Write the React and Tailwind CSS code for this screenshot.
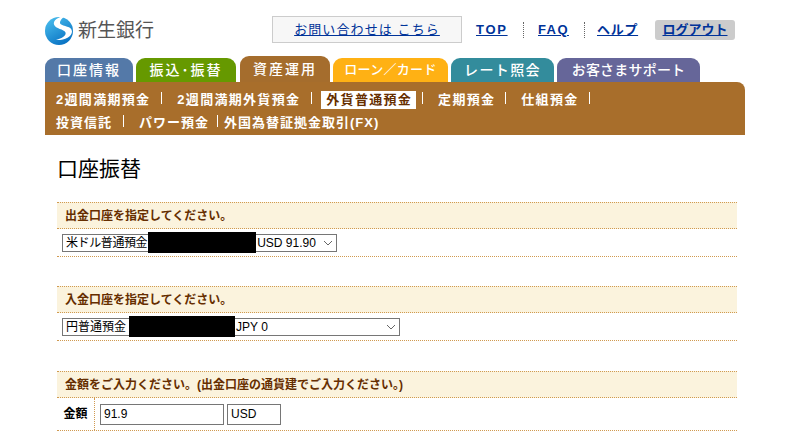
const font = { fontFamily: '"Liberation Sans", "Noto Sans CJK JP", sans-serif' };

function Logo() {
  return (
    <svg width="28" height="29" viewBox="0 0 28 29" className="shrink-0">
      <defs>
        <linearGradient id="lg" x1="0" y1="0" x2="0.6" y2="1">
          <stop offset="0" stopColor="#4fc3f0" />
          <stop offset="1" stopColor="#0a74c4" />
        </linearGradient>
      </defs>
      <circle cx="14" cy="15" r="14" fill="url(#lg)" />
      <path d="M20 0 C12 1 8 5 9 8.5 C10.5 13 19 13 20.5 16.5 C21.5 19.5 17 22.5 11 24 C19 24.5 27 21 27 15.5 C27 10 18 10.5 15.5 8 C14 6 16 3 20 0 Z" fill="#fff" />
    </svg>
  );
}

const tabs = [
  ["口座情報", "w-[88px] h-[24px] bg-[#5479a8] mr-[3px] text-[14px] tracking-[2px]"],
  ["振込･振替", "w-[100px] h-[24px] bg-[#669900] mr-[4px] text-[14px] tracking-[2px]"],
  ["資産運用", "w-[90px] h-[26px] bg-[#a56d2d] mr-[3px] text-[14px] tracking-[2px]"],
  ["ローン／カード", "w-[115px] h-[24px] bg-[#ffb114] mr-[3px] text-[13px] tracking-[0.3px]"],
  ["レート照会", "w-[103px] h-[24px] bg-[#338c9c] mr-[3px] text-[14px] tracking-[1.4px]"],
  ["お客さまサポート", "w-[143px] h-[24px] bg-[#666699] text-[14px] tracking-[0.2px]"],
];

function Sep() {
  return <span className="inline-block w-px h-[12px] bg-white" />;
}

function SectionHead({ children }) {
  return (
    <div className="h-[27px] bg-[#fbf3dd] border-t border-b border-dotted border-[#d09a50] pl-[8px] flex items-center text-[12px] font-bold text-[#662e00]">
      {children}
    </div>
  );
}

function Chevron() {
  return (
    <svg width="10" height="6" viewBox="0 0 10 6" className="shrink-0">
      <path d="M1 1 L5 5 L9 1" fill="none" stroke="#666" strokeWidth="1" />
    </svg>
  );
}

function Picker({ width, label, labelClass, black, rest, gap }) {
  return (
    <div className={`${width} h-[18px] border border-[#767676] bg-white flex items-center text-[12px] text-black pl-[3px] pr-[3px]`}>
      <span className={`${labelClass} whitespace-nowrap`}>{label}</span>
      <span className={`${black} ${gap} h-[21px] bg-black shrink-0`} />
      <span className="ml-px whitespace-nowrap flex-1">{rest}</span>
      <Chevron />
    </div>
  );
}

export default function App() {
  return (
    <div className="w-[793px] h-[446px] overflow-hidden bg-white" style={font}>
      <div className="w-[700px] ml-[45px]">
        <header className="h-[56px] pt-[16px] flex items-start">
          <div className="w-[227px] flex items-center gap-[5px]">
            <Logo />
            <span className="text-[19px] leading-[28px] text-[#555]">新生銀行</span>
          </div>
          <div className="w-[190px] h-[27px] border border-[#ccc] bg-[#f7f7f7] flex items-center justify-center">
            <a className="text-[13px] text-[#003399] underline tracking-[1.1px] whitespace-nowrap">お問い合わせは こちら</a>
          </div>
          <nav className="h-[27px] flex items-center ml-[14px] text-[13px] font-bold">
            <a className="w-[32px] text-[#003399] underline tracking-[1.7px]">TOP</a>
            <span className="ml-[15px] h-[16px] border-l border-dotted border-[#666]" />
            <a className="ml-[14px] w-[32px] text-[#003399] underline tracking-[1.4px]">FAQ</a>
            <span className="ml-[14px] h-[16px] border-l border-dotted border-[#666]" />
            <a className="ml-[12px] w-[41px] text-[#003399] underline whitespace-nowrap tracking-[0.7px]">ヘルプ</a>
            <span className="ml-[17px] w-[80px] h-[20px] rounded-[3px] bg-[#cccccc] flex items-center justify-center">
              <a className="text-[#003399] underline whitespace-nowrap">ログアウト</a>
            </span>
          </nav>
        </header>

        <div className="h-[26px] flex items-end">
          {tabs.map(([t, c]) => (
            <div key={t} className={`${c} rounded-t-[9px] flex items-center justify-center text-white whitespace-nowrap font-medium`}>
              {t}
            </div>
          ))}
        </div>

        <div className="h-[53px] bg-[#a86e2b] rounded-tr-[8px] pl-[11px] pt-[9px] text-[13px] font-bold text-white">
          <div className="h-[18px] flex items-center whitespace-nowrap tracking-[1.3px]">
            <span>2週間満期預金</span>
            <span className="ml-[11px]"><Sep /></span>
            <span className="ml-[15px]">2週間満期外貨預金</span>
            <span className="ml-[11px]"><Sep /></span>
            <span className="ml-[9px] bg-white text-[#662e00] pl-[5px] pr-[4px] h-[18px] leading-[18px]">外貨普通預金</span>
            <span className="ml-[6px]"><Sep /></span>
            <span className="ml-[15px]">定期預金</span>
            <span className="ml-[10px]"><Sep /></span>
            <span className="ml-[15px]">仕組預金</span>
            <span className="ml-[10px]"><Sep /></span>
          </div>
          <div className="h-[18px] mt-[5px] flex items-center whitespace-nowrap tracking-[1px]">
            <span>投資信託</span>
            <span className="ml-[11px]"><Sep /></span>
            <span className="ml-[15px]">パワー預金</span>
            <span className="ml-[8px]"><Sep /></span>
            <span className="ml-[6px]">外国為替証拠金取引(FX)</span>
          </div>
        </div>

        <h1 className="ml-[12px] mt-[20px] h-[28px] text-[21px] leading-[28px] font-normal text-black">口座振替</h1>

        <section className="ml-[12px] w-[680px] mt-[19px]">
          <SectionHead>出金口座を指定してください。</SectionHead>
          <div className="h-[28px] border-b border-dotted border-[#d09a50] pl-[5px] flex items-center">
            <Picker width="w-[275px]" label="米ドル普通預金" labelClass="tracking-[-0.4px]" black="w-[108px]" gap="ml-px" rest="USD 91.90" />
          </div>
        </section>

        <section className="ml-[12px] w-[680px] mt-[29px]">
          <SectionHead>入金口座を指定してください。</SectionHead>
          <div className="h-[28px] border-b border-dotted border-[#d09a50] pl-[5px] flex items-center">
            <Picker width="w-[338px]" label="円普通預金" labelClass="" black="w-[106px]" gap="ml-[3px]" rest="JPY 0" />
          </div>
        </section>

        <section className="ml-[12px] w-[680px] mt-[30px]">
          <SectionHead>金額をご入力ください。(出金口座の通貨建でご入力ください。)</SectionHead>
          <div className="h-[33px] border-b border-dotted border-[#d09a50] flex items-stretch">
            <div className="w-[38px] border-r border-dotted border-[#d09a50] flex items-center justify-center text-[12px] font-bold text-black">金額</div>
            <div className="flex items-center pl-[5px] gap-[3px]">
              <div className="w-[124px] h-[21px] border border-[#767676] pl-[3px] text-[12px] leading-[19px] text-black">91.9</div>
              <div className="w-[54px] h-[21px] border border-[#767676] pl-[3px] text-[12px] leading-[19px] text-black">USD</div>
            </div>
          </div>
        </section>
      </div>
    </div>
  );
}
